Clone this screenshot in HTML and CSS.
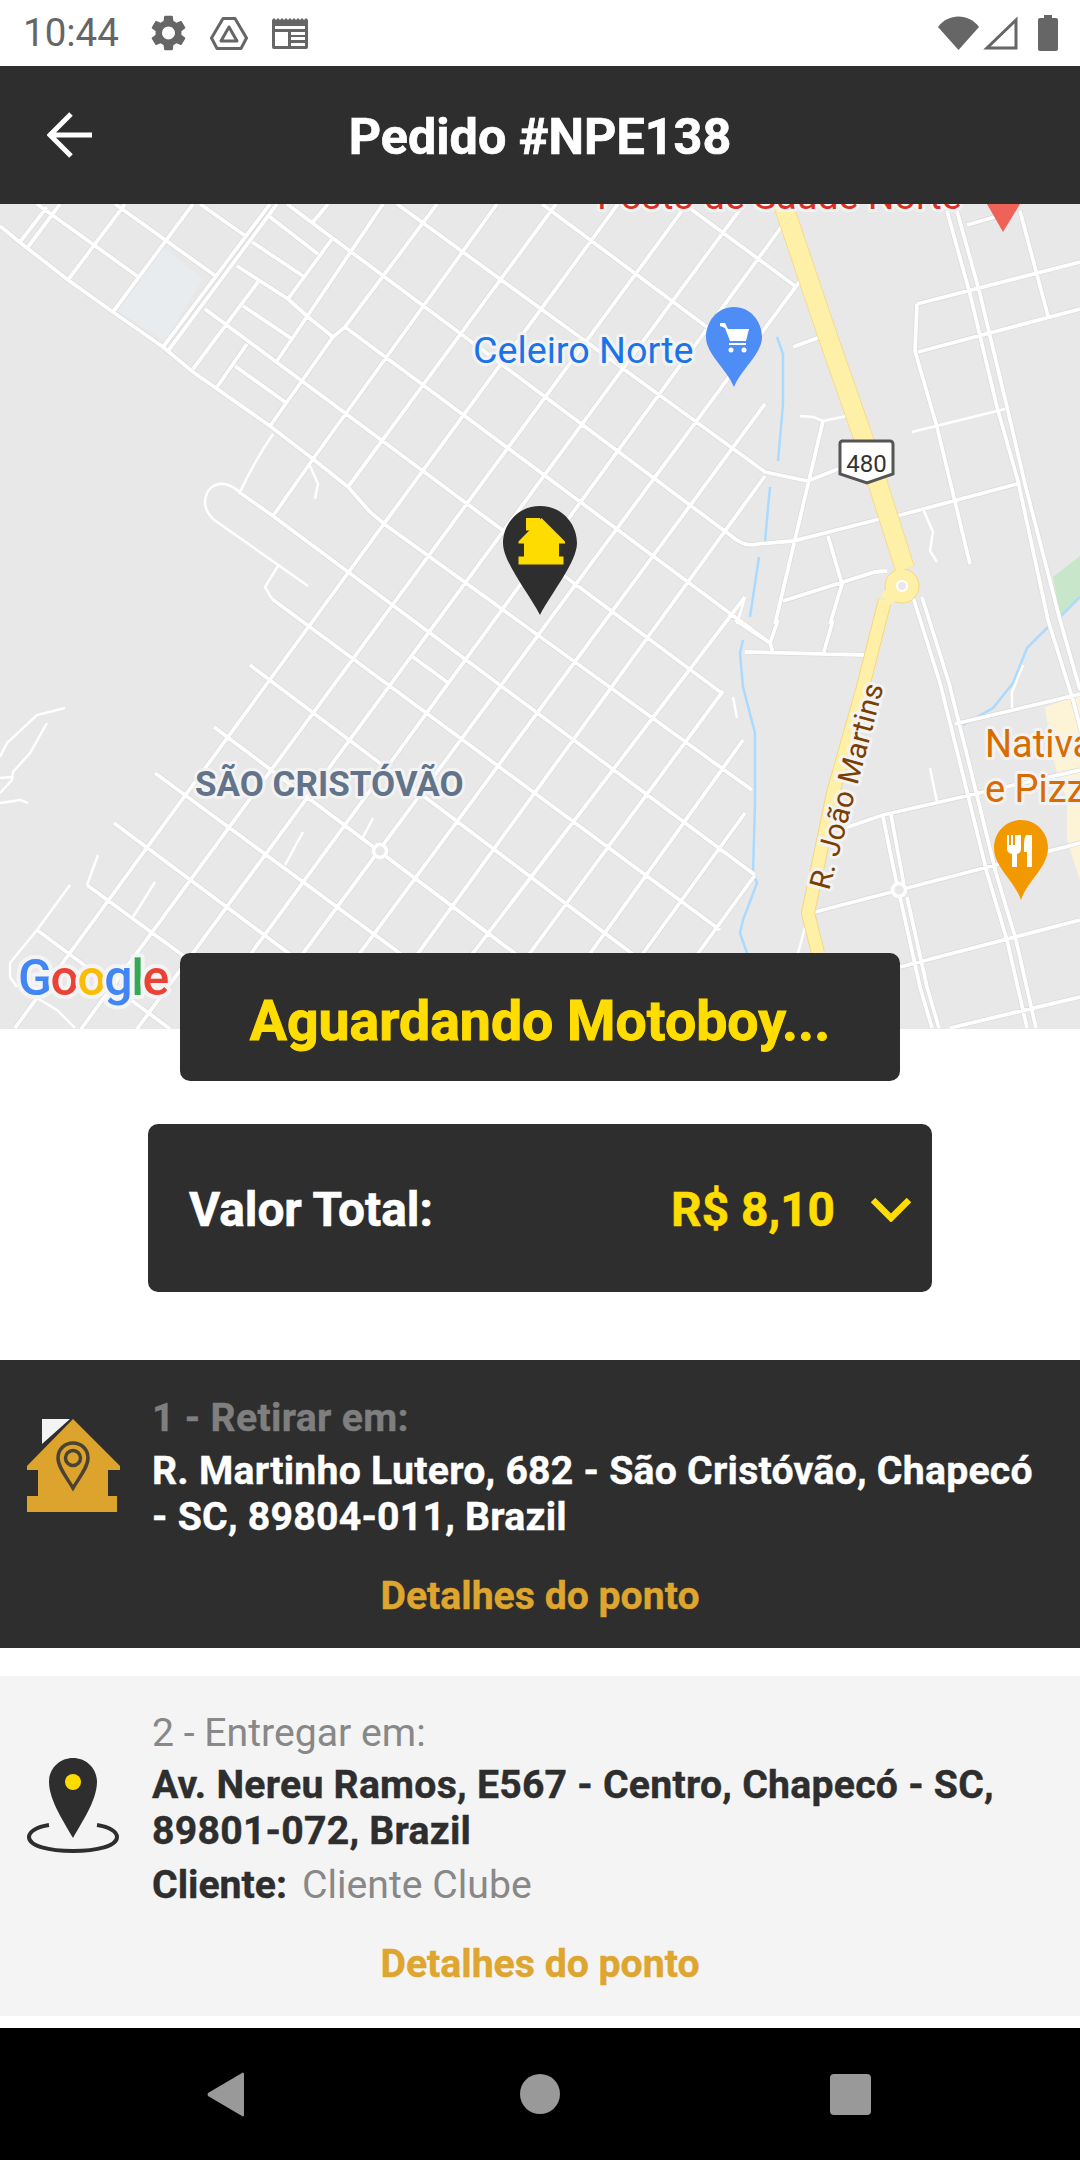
FILE: index.html
```html
<!DOCTYPE html>
<html lang="pt-BR">
<head>
<meta charset="utf-8">
<title>Pedido #NPE138</title>
<link rel="stylesheet" href="styles.css">
</head>
<body>
<div class="screen">
  <header class="status">
    <div class="status-left">
      <span class="time">10:44</span>
      <svg class="ic-gear" viewBox="2.5 2 19 20"><path fill="#666" d="M19.14 12.94c.04-.3.06-.61.06-.94 0-.32-.02-.64-.07-.94l2.03-1.58c.18-.14.23-.41.12-.61l-1.92-3.32c-.12-.22-.37-.29-.59-.22l-2.39.96c-.5-.38-1.03-.7-1.62-.94l-.36-2.54c-.04-.24-.24-.41-.48-.41h-3.84c-.24 0-.43.17-.47.41l-.36 2.54c-.59.24-1.13.57-1.62.94l-2.39-.96c-.22-.08-.47 0-.59.22L2.74 8.87c-.12.21-.08.47.12.61l2.03 1.58c-.05.3-.09.63-.09.94s.02.64.07.94l-2.03 1.58c-.18.14-.23.41-.12.61l1.92 3.32c.12.22.37.29.59.22l2.39-.96c.5.38 1.03.7 1.62.94l.36 2.54c.05.24.24.41.48.41h3.84c.24 0 .44-.17.47-.41l.36-2.54c.59-.24 1.13-.56 1.62-.94l2.39.96c.22.08.47 0 .59-.22l1.92-3.32c.12-.22.07-.47-.12-.61l-2.01-1.58zM12 15.6c-1.98 0-3.6-1.62-3.6-3.6s1.62-3.6 3.6-3.6 3.6 1.62 3.6 3.6-1.62 3.6-3.6 3.6z"/></svg>
      <svg class="ic-drive" viewBox="0 0 38 33"><path fill="none" stroke="#666" stroke-width="3" stroke-linejoin="round" d="M13 1.500H25L36.500 21 31 31.500H7L1.500 21Z"/><path fill="none" stroke="#666" stroke-width="3" stroke-linejoin="round" d="M19 10L27 24H11Z"/></svg>
      <svg class="ic-news" viewBox="0 0 36 31"><path fill="#666" d="M0 2L2 0 4 2 6 0 8 2 10 0 12 2 14 0 16 2 18 0 20 2 22 0 24 2 26 0 28 2 30 0 32 2 34 0 36 2V29a2 2 0 0 1-2 2H2a2 2 0 0 1-2-2Z"/><path fill="#fff" d="M3 8H33V11H3ZM3 14H16V28H3ZM19 14H33V17H19ZM19 19H33V22H19ZM19 25H33V28H19Z"/></svg>
    </div>
    <div class="status-right">
      <svg class="ic-wifi" viewBox="0 0 41 34"><path fill="#666" d="M0 11C10-3 31-3 41 11L20.500 34Z"/></svg>
      <svg class="ic-cell" viewBox="0 0 35 34"><path fill="none" stroke="#666" stroke-width="3" d="M33 4V32H4Z"/></svg>
      <svg class="ic-batt" viewBox="0 0 20 36"><path fill="#666" d="M6 0H14V3H18a2 2 0 0 1 2 2V34a2 2 0 0 1-2 2H2a2 2 0 0 1-2-2V5a2 2 0 0 1 2-2H6Z"/></svg>
    </div>
  </header>

  <div class="appbar">
    <svg class="ic-back" viewBox="0 0 45 46"><path fill="none" stroke="#fff" stroke-width="5" d="M45 23H4M24 2L3 23 24 44"/></svg>
    <h1 class="title">Pedido #NPE138</h1>
    <span></span>
  </div>

  <div class="map">
    <svg class="map-svg" viewBox="0 204 1080 825" width="1080" height="825">
      <defs>
        <path id="streets" d="M37 204L137 276M115 204L217 277M200 204L247 237M252 242L303 276M270 217L318 254M287 204L730 535Q745 548 757 544L793 541 880 519M897 516L1017 484M397 204L765 472 808 481 838 469M237 266L288 299 308 317 333 337M345 327L770 643 773 653M205 309L723 694M243 306L292 339M235 366L285 402M0 226L22 244 68 280 113 312 163 347 193 372 270 426 313 459 348 487 370 512 387 526 752 790M239 492L273 516 755 875M272 599L720 930M250 665L700 1005M214 727L610 1025M155 773L500 1027M114 823L390 1029M87 885L283 1029M37 930L170 1029M542 204L735 348M684 204L795 286M413 657L447 682M20 242L47 207M28 247L60 204M68 280L125 204M113 312L193 204M163 347L270 204M168 351L277 204M193 369L258 282M217 387L247 344M437 204L345 327 333 337 270 426M383 204L277 361M332 239L288 299M328 204L313 222M497 204L313 459 273 516M556 204L348 487M618 204L15 1028M687 204L81 1029M744 204L137 1029M782 226L196 1029M800 281L247 1029M765 404L304 1029M765 476L363 1029M745 597L415 1029M723 691L474 1029M743 740L536 1029M745 813L588 1029M755 875L643 1029M793 347L820 337M823 421L775 624M783 601L875 572 887 571M828 536L842 584 830 624M947 211L970 294 997 407 1018 481 1048 620 1073 700 1110 840M957 211L980 294 1007 407 1025 484 1060 620 1080 690M1020 211L1048 316M917 304L1080 262M917 304L915 351 937 427 970 564M918 352L1080 309M913 597L940 683 960 763 987 873 1007 940 1027 1028M922 597L949 683 969 763 996 873 1016 940 1036 1028M955 724L1080 694M845 828L883 815 1080 770M883 817L897 885M891 815L904 885M900 897L920 987 932 1028M907 897L927 987 939 1028M815 912L1080 843M900 967L1080 920M950 1028L1080 997M745 652L868 655M735 620L770 643M778 620L770 643M833 620L823 655M967 225L1005 214"/>
        <path id="lanes" d="M273 434Q255 460 240 492 220 476 208 491 200 506 213 519L308 586M278 566L265 587 272 599M310 466L318 484 315 499M98 855L87 885M155 882L133 917M303 832L285 865M373 818L363 837M70 885L37 930 10 963 10 977 17 987M65 708L37 715 7 743 0 757M47 723L30 753 13 772 12 780 0 793M0 778L12 777M0 803L20 800 28 803M37 998L57 1010 75 1028M800 416L813 417 823 421 847 416M912 432L1005 409M923 509L933 532 930 551 937 562M930 768L937 802M733 697L737 718M1023 665L1012 692 1012 708M808 917L798 953M745 597L737 624"/>
      </defs>
      <path class="bldg" d="M163 247L203 279 165 341 118 311Z"/>
      <path class="yellowarea" d="M1045 707L1080 695V880L1067 840V800L1053 760Z"/>
      <path class="park" d="M1053 577L1080 556V597L1060 617Z"/>
      <path class="river" d="M777 337L783 354 783 404 778 461M770 487L765 541M759 557L750 617M743 640L740 653 743 687 755 733 755 803 753 873 757 883 743 920 740 933 747 953M1048 627L1027 648 1013 683 993 708 963 725M1060 617L1080 597"/>
      <use href="#streets" class="casing"/>
      <use href="#streets" class="road"/>
      <use href="#lanes" class="thin"/>

      <path class="hw-edge hw-upper" d="M783 204L827 334 863 437 905 569"/>
      <path class="hw-edge hw-lower" d="M885 600L863 687 833 793 808 913 818 953"/>
      <circle class="rb" cx="902" cy="586" r="17"/>
      <path class="hw hw-upper" d="M783 204L827 334 863 437 905 569"/>
      <path class="hw hw-lower" d="M885 600L863 687 833 793 808 913 818 953"/>
      <path class="hw hw-link" d="M902 586L885 600"/>
      <circle class="rb-hole" cx="902" cy="586" r="5"/>
      <circle class="rb-road" cx="380" cy="851" r="6.500"/>
      <circle class="rb-road" cx="899" cy="890" r="6.500"/>

      <text class="lbl lbl-red" x="597" y="209">Posto de Saúde Norte</text>
      <path class="pin-red" d="M987 204H1020L1003 232Z"/>
      <text class="lbl lbl-blue" x="473" y="363">Celeiro Norte</text>
      <path class="pin-blue" d="M734 307C751 307 762 322 762 337 762 354 742 368 734 387 726 368 706 354 706 337 706 322 717 307 734 307Z"/>
      <path class="pin-glyph" d="M720 323H725L728 329H749L746 341H730L725 328 720 326ZM729 343H746V345H729Z"/>
      <circle class="pin-glyph" cx="731" cy="350" r="2.500"/><circle class="pin-glyph" cx="744" cy="350" r="2.500"/>
      <path class="shield" d="M842 441H890A3 3 0 0 1 893 444V474L867 483 840 474V444A3 3 0 0 1 842 441Z"/>
      <text class="lbl-shield" x="866.500" y="472">480</text>
      <text class="lbl lbl-area" x="195" y="796">SÃO CRISTÓVÃO</text>
      <text class="lbl lbl-road" transform="translate(829 891) rotate(-75)">R. João Martins</text>
      <text class="lbl lbl-food" x="985" y="757">Nativa</text>
      <text class="lbl lbl-food" x="985" y="802">e Pizza</text>
      <path class="pin-orange" d="M1021 820C1037 820 1048 833 1048 848 1048 867 1028 880 1021 900 1014 880 994 867 994 848 994 833 1005 820 1021 820Z"/>
      <path class="pin-glyph" d="M1007 835H1009V845H1011V835H1013V845H1015V835H1017V835H1021V849Q1021 853 1017 854V867H1012V854Q1007 853 1007 849ZM1026 835H1032V867H1027V852H1024V845Q1024 838 1026 835Z"/>
      <text class="google" x="18" y="995"><tspan class="g-b">G</tspan><tspan class="g-r">o</tspan><tspan class="g-y">o</tspan><tspan class="g-b">g</tspan><tspan class="g-g">l</tspan><tspan class="g-r">e</tspan></text>

      <path class="pin-dark" d="M540 506C562 506 577 524 577 543 577 562 552 592 540 615 528 592 503 562 503 543 503 524 518 506 540 506Z"/>
      <g transform="translate(516.500 517.500) scale(.5)">
        <path class="marker-house" d="M19 1H47V26H19Z"/>
        <path class="marker-house" d="M50 1L97 48V52H85V78H94V94H4V78H15V52H4V48Z"/>
      </g>
    </svg>
  </div>

  <div class="pill">Aguardando Motoboy...</div>

  <div class="total">
    <span class="total-label">Valor Total:</span>
    <div class="total-right">
      <span class="total-value">R$ 8,10</span>
      <svg class="ic-chev" viewBox="0 0 40 25"><path fill="none" stroke="#ffdd00" stroke-width="6.500" d="M2 3L20 21 38 3"/></svg>
    </div>
  </div>

  <section class="stop stop-dark">
    <div class="stop-main">
      <svg class="stop-icon" viewBox="0 0 100 100">
        <path class="chimney" d="M19 1H47L19 26Z"/>
        <path class="house" d="M50 1L97 48V52H85V78H94V94H4V78H15V52H4V48Z"/>
        <path class="house-pin" d="M50 25C58 25 65 31 65 40 65 49 56 60 50 70 44 60 35 49 35 40 35 31 42 25 50 25Z"/>
        <circle class="house-pin" cx="50" cy="40" r="7.500"/>
      </svg>
      <div class="stop-text">
        <div class="stop-label stop-label-bold">1 - Retirar em:</div>
        <div class="stop-addr">R. Martinho Lutero, 682 - São Cristóvão, Chapecó - SC, 89804-011, Brazil</div>
      </div>
    </div>
    <div class="stop-link">Detalhes do ponto</div>
  </section>

  <section class="stop stop-light">
    <div class="stop-main">
      <svg class="stop-icon" viewBox="0 0 100 100">
        <path class="ring" d="M74 66C87 68 94 73 94 78 94 87 74 92 50 92 26 92 6 87 6 78 6 73 13 68 26 66"/>
        <path class="drop" d="M50-1C63-1 74 9 74 23 74 42 57 66 50 79 43 66 26 42 26 23 26 9 37-1 50-1Z"/>
        <circle class="dot" cx="50" cy="23" r="8"/>
      </svg>
      <div class="stop-text">
        <div class="stop-label">2 - Entregar em:</div>
        <div class="stop-addr">Av. Nereu Ramos, E567 - Centro, Chapecó - SC, 89801-072, Brazil</div>
        <div class="stop-client"><b>Cliente:</b><span>Cliente Clube</span></div>
      </div>
    </div>
    <div class="stop-link">Detalhes do ponto</div>
  </section>

  <nav class="navbar">
    <svg class="nav-back" viewBox="0 0 38 45"><path fill="#999" d="M37 1.500V43.500Q36 45 35 44L1 24Q0 22.500 1 21L35 1Q36 0 37 1.500Z"/></svg>
    <span class="nav-home"></span>
    <span class="nav-recent"></span>
  </nav>
</div>
</body>
</html>
```
FILE: styles.css
```css
* { box-sizing: border-box; }
html, body { margin: 0; padding: 0; }
body { font-family: Roboto, "Liberation Sans", sans-serif; background: #fff; }
.screen { width: 1080px; height: 2160px; display: flex; flex-direction: column; overflow: hidden; }

.status { height: 66px; flex: none; display: flex; align-items: center; justify-content: space-between; padding: 0 22px 0 23px; background: #fff; }
.status-left, .status-right { display: flex; align-items: center; }
.time { font-size: 38.5px; color: #666; line-height: 1; margin-right: 32px; }
.ic-gear { width: 35px; height: 36px; margin-right: 24px; }
.ic-drive { width: 38px; height: 33px; margin-right: 24px; }
.ic-news { width: 36px; height: 31px; }
.ic-wifi { width: 41px; height: 34px; margin-right: 4px; }
.ic-cell { width: 35px; height: 34px; margin-right: 20px; }
.ic-batt { width: 20px; height: 36px; }

.appbar { height: 138px; flex: none; background: #2e2e2e; display: grid; grid-template-columns: 1fr auto 1fr; align-items: center; padding-left: 47px; }
.ic-back { width: 45px; height: 46px; }
.title { margin: 0; color: #fff; font-size: 50.3px; font-weight: 700; -webkit-text-stroke: .7px #fff; line-height: 1; padding: 4px 47px 0 0; }

.map { height: 825px; flex: none; background: #e8e8e8; overflow: hidden; }
.map-svg { display: block; }
.bldg { fill: #e9ecef; }
.yellowarea { fill: #fdf3d7; }
.park { fill: #c8e6c9; }
.river { fill: none; stroke: #aadaff; stroke-width: 2.5; }
.casing { fill: none; stroke: #d8d8d8; stroke-width: 5; }
.road { fill: none; stroke: #fff; stroke-width: 3.8; }
.thin { fill: none; stroke: #fff; stroke-width: 2.4; }
.hw-edge { fill: none; stroke: #f6d77f; stroke-linejoin: round; }
.hw-edge.hw-upper { stroke-width: 20; }
.hw-edge.hw-lower { stroke-width: 14; }
.hw { fill: none; stroke: #fff0a8; stroke-linejoin: round; }
.hw.hw-upper { stroke-width: 18.5; }
.hw.hw-lower { stroke-width: 12; }
.hw.hw-link { stroke-width: 14; }
.rb { fill: #fff0a8; stroke: #f6d77f; stroke-width: 1; }
.rb-hole { fill: #e8e8e8; stroke: #fff; stroke-width: 2; }
.rb-road { fill: #e8e8e8; stroke: #fff; stroke-width: 3.5; }
.lbl { paint-order: stroke; stroke-linejoin: round; stroke: #f3f3f3; stroke-width: 6px; font-family: Roboto, sans-serif; }
.lbl-red { fill: #d93025; font-size: 37.5px; }
.lbl-blue { fill: #1a73e8; font-size: 37.7px; }
.lbl-area { fill: #63738a; font-size: 35px; font-weight: 700; }
.lbl-road { fill: #7b3f00; font-size: 29.5px; letter-spacing: .3px; }
.lbl-food { fill: #d96c00; font-size: 38px; }
.lbl-shield { fill: #333; font-size: 24px; font-family: Roboto, sans-serif; text-anchor: middle; }
.shield { fill: #fff; stroke: #555; stroke-width: 3; }
.pin-red { fill: #ee6257; }
.pin-blue { fill: #4e8df5; }
.pin-orange { fill: #f29900; }
.pin-glyph { fill: #fff; }
.pin-dark { fill: #2e2e2e; }
.marker-house { fill: #ffdc00; }
.google { font-family: Roboto, sans-serif; font-size: 50px; font-weight: 500; letter-spacing: -1.5px; paint-order: stroke; stroke: #f4f4f4; stroke-width: 8px; stroke-linejoin: round; }
.g-b { fill: #4285f4; }
.g-r { fill: #ea4335; }
.g-y { fill: #fbbc05; }
.g-g { fill: #34a853; }

.pill { width: 720px; height: 128px; flex: none; margin: -76px auto 0; padding-top: 8px; background: #2e2e2e; border-radius: 10px; color: #ffdd00; font-size: 55.4px; font-weight: 700; -webkit-text-stroke: 1px #ffdd00; display: flex; align-items: center; justify-content: center; position: relative; }

.total { width: 784px; height: 168px; flex: none; margin: 43px auto 0; padding: 3px 21px 0 41px; background: #2e2e2e; border-radius: 10px; display: flex; align-items: center; justify-content: space-between; font-size: 47.8px; font-weight: 700; -webkit-text-stroke: .6px; }
.total-label { color: #fff; }
.total-right { display: flex; align-items: center; gap: 36px; }
.total-value { color: #ffdd00; }
.ic-chev { width: 40px; height: 25px; }

.stop { flex: none; }
.stop-dark { margin-top: 68px; height: 288px; padding-top: 35px; background: #2e2e2e; }
.stop-light { margin-top: 28px; height: 340px; padding-top: 34px; background: #f4f4f4; }
.stop-main { display: flex; align-items: center; padding-left: 23px; }
.stop-icon { width: 100px; height: 100px; flex: none; margin-right: 29px; overflow: visible; }
.stop-text { flex: 1; padding-right: 40px; font-size: 39.2px; line-height: 46px; }
.stop-label { color: #888; height: 52px; }
.stop-label-bold { font-weight: 700; color: #7f7f7f; height: 53px; letter-spacing: .3px; -webkit-text-stroke: .4px; }
.stop-addr { font-weight: 700; letter-spacing: .24px; -webkit-text-stroke: .4px; }
.stop-dark .stop-addr { color: #fff; }
.stop-light .stop-addr { color: #2e2e2e; }
.stop-client { margin-top: 8px; color: #888; display: flex; gap: 15px; }
.stop-client b { color: #2e2e2e; -webkit-text-stroke: .4px; }
.stop-link { margin-top: 33px; text-align: center; font-size: 39.2px; line-height: 46px; font-weight: 700; color: #dea52f; -webkit-text-stroke: .4px; }

.chimney { fill: #f4f4f4; }
.house { fill: #dca42d; }
.house-pin { fill: none; stroke: #4a4232; stroke-width: 3.5; }
.ring { fill: none; stroke: #2e2e2e; stroke-width: 4; }
.drop { fill: #2e2e2e; }
.dot { fill: #ffdc00; }

.navbar { margin-top: auto; height: 132px; flex: none; background: #000; display: flex; align-items: center; padding: 0 209px 0 207px; justify-content: space-between; }
.nav-back { width: 38px; height: 45px; }
.nav-home { width: 40px; height: 40px; margin-left: 5px; border-radius: 50%; background: #999; }
.nav-recent { width: 41px; height: 41px; border-radius: 4px; background: #999; }
```
